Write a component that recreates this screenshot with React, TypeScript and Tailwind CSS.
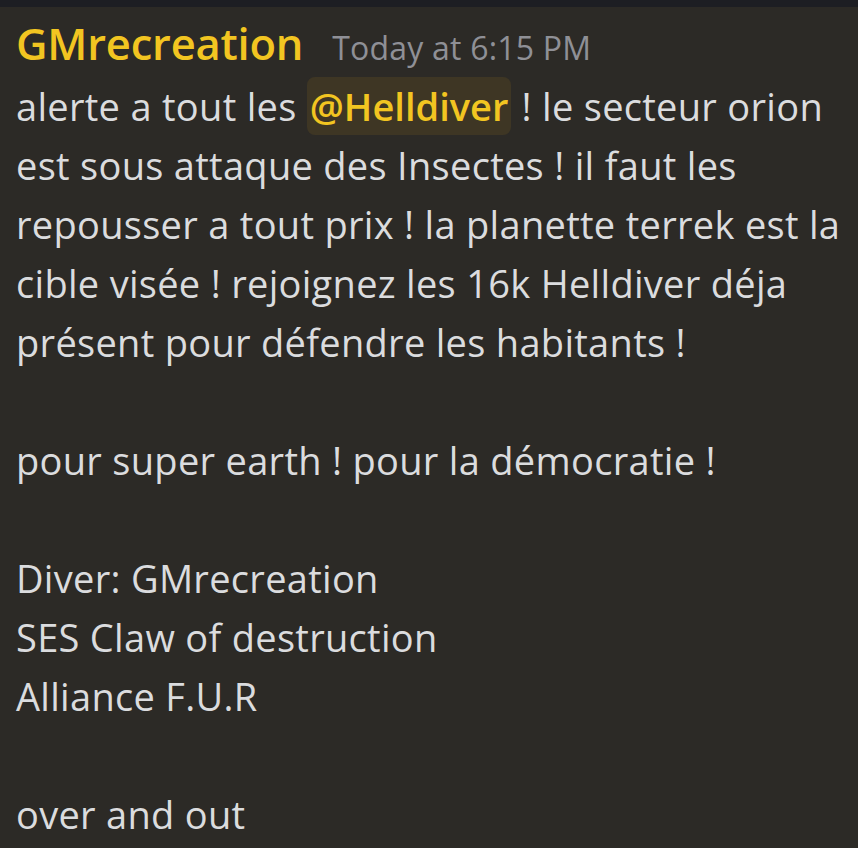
import React from "react"

const lines: (React.ReactNode | null)[] = [
  <>
    alerte a tout les{" "}
    <span className="inline-block rounded-lg bg-[#3e3624] px-[3px] leading-[58px] text-[#f2c521] font-semibold tracking-[0px]">@Helldiver</span> ! le secteur orion
  </>,
  "est sous attaque des Insectes ! il faut les",
  "repousser a tout prix ! la planette terrek est la",
  "cible visée ! rejoignez les 16k Helldiver déja",
  "présent pour défendre les habitants !",
  null,
  "pour super earth ! pour la démocratie !",
  null,
  "Diver: GMrecreation",
  "SES Claw of destruction",
  "Alliance F.U.R",
  null,
  "over and out",
]

export default function App() {
  return (
    <div className="w-[858px] h-[848px] overflow-hidden bg-[#2c2a26] font-['Open_Sans',sans-serif]">
      <div className="h-[7px] bg-[#1d1e23]" />
      <div className="pl-4 pt-[7px]">
        <div className="flex items-baseline gap-[29px] leading-[59px] whitespace-nowrap">
          <span className="text-[43.5px] font-semibold tracking-[-0.2px] text-[#f2c521]">GMrecreation</span>
          <span className="text-[32px] text-[#8f9096] tracking-[0.2px]">Today at 6:15 PM</span>
        </div>
        <div className="text-[38px] leading-[59px] tracking-[0.3px] text-[#dbdcde] whitespace-nowrap">
          {lines.map((l, i) => (
            <div key={i} className="h-[59px]">
              {l}
            </div>
          ))}
        </div>
      </div>
    </div>
  )
}
